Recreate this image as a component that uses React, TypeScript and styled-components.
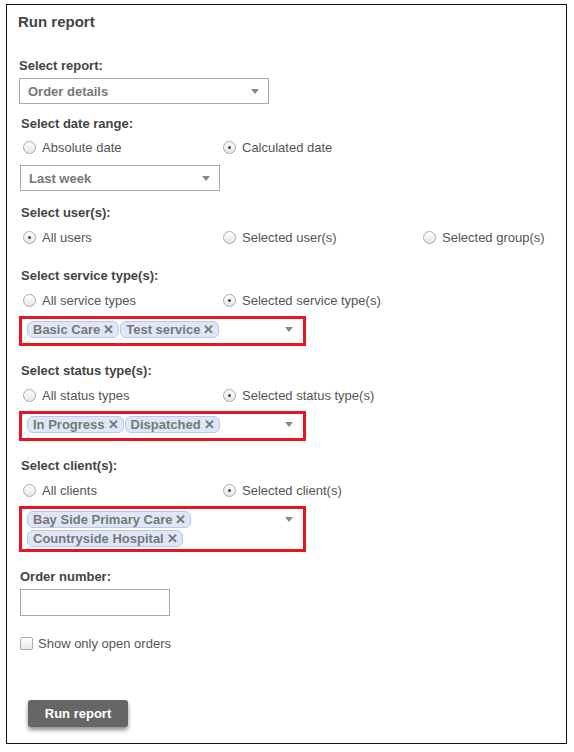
import styled, { createGlobalStyle } from 'styled-components';

const GlobalStyle = createGlobalStyle`
  body {
    margin: 0;
    background: #fff;
    font-family: 'Liberation Sans', Arial, sans-serif;
  }
`;

const Panel = styled.div`
  box-sizing: border-box;
  width: 561px;
  height: 740px;
  margin: 4px 0 0 6px;
  padding: 9px 12px 0 11px;
  border: 1px solid #111;
  display: flex;
  flex-direction: column;
  align-items: flex-start;
`;

const Title = styled.h1`
  margin: 0;
  font-size: 15px;
  line-height: 16px;
  font-weight: bold;
  color: #444;
`;

const Label = styled.div<{ $mt: number; $indent?: number }>`
  margin-top: ${({ $mt }) => $mt}px;
  margin-left: ${({ $indent = 1 }) => $indent}px;
  font-size: 13px;
  line-height: 16px;
  font-weight: bold;
  color: #444;
`;

const Caret = styled.span`
  width: 0;
  height: 0;
  border-left: 4px solid transparent;
  border-right: 4px solid transparent;
  border-top: 5px solid #888;
`;

const Select = styled.div<{ $mt: number; $width: number; $indent?: number }>`
  box-sizing: border-box;
  margin-top: ${({ $mt }) => $mt}px;
  margin-left: ${({ $indent = 1 }) => $indent}px;
  width: ${({ $width }) => $width}px;
  height: 26px;
  padding: 0 9px 0 8px;
  border: 1px solid #aaa;
  display: flex;
  align-items: center;
  justify-content: space-between;
  font-size: 13px;
  font-weight: bold;
  color: #777;
`;

const RadioRow = styled.div<{ $mt: number }>`
  margin-top: ${({ $mt }) => $mt}px;
  margin-left: 5px;
  height: 18px;
  display: grid;
  grid-template-columns: 200px 200px 140px;
`;

const Option = styled.label`
  display: flex;
  align-items: center;
  gap: 6px;
  font-size: 13px;
  color: #555;
  white-space: nowrap;
`;

const RadioDot = styled.span<{ $checked?: boolean }>`
  box-sizing: border-box;
  width: 13px;
  height: 13px;
  border-radius: 50%;
  border: 1px solid #a9a9a9;
  background: linear-gradient(#fff, #e6e6e6);
  display: flex;
  align-items: center;
  justify-content: center;

  &::after {
    content: '';
    display: ${({ $checked }) => ($checked ? 'block' : 'none')};
    width: 3px;
    height: 3px;
    border-radius: 50%;
    background: #444;
  }
`;

const TagBox = styled.div<{ $mt: number; $height: number }>`
  box-sizing: border-box;
  position: relative;
  margin: ${({ $mt }) => $mt}px 0 0 1px;
  width: 287px;
  height: ${({ $height }) => $height}px;
  padding: 2px 24px 0 5px;
  border: 3px solid #e8141e;
  display: flex;
  flex-wrap: wrap;
  align-content: flex-start;
  gap: 2px 1px;

  ${Caret} {
    position: absolute;
    right: 10px;
    top: 8px;
  }
`;

const Tag = styled.span`
  box-sizing: border-box;
  height: 17px;
  padding: 0 4px 0 5px;
  display: inline-flex;
  align-items: center;
  gap: 3px;
  background: #dfe7f7;
  border: 1px solid #b9c8e8;
  border-radius: 6px;
  font-size: 13px;
  font-weight: bold;
  color: #777;
  white-space: nowrap;

  b {
    font-size: 13px;
    color: #777;
  }
`;

const TextInput = styled.input<{ $mt: number }>`
  box-sizing: border-box;
  margin: ${({ $mt }) => $mt}px 0 0 2px;
  width: 150px;
  height: 27px;
  border: 1px solid #aaa;
  font: 13px 'Liberation Sans', Arial, sans-serif;
`;

const CheckRow = styled.label<{ $mt: number }>`
  margin-top: ${({ $mt }) => $mt}px;
  margin-left: 2px;
  height: 18px;
  display: flex;
  align-items: center;
  gap: 5px;
  font-size: 13px;
  color: #555;
`;

const CheckBox = styled.span`
  box-sizing: border-box;
  width: 13px;
  height: 13px;
  border: 1px solid #aaa;
  border-radius: 2px;
  background: linear-gradient(#fff, #e8e8e8);
`;

const RunButton = styled.button`
  margin: 48px 0 0 10px;
  width: 100px;
  height: 27px;
  border: none;
  border-radius: 3px;
  background: #666;
  color: #fff;
  font: bold 13px 'Liberation Sans', Arial, sans-serif;
  box-shadow: 0 3px 4px rgba(0, 0, 0, 0.45);
`;

type RadioOpt = { label: string; checked?: boolean };

function Radios({ mt, options }: { mt: number; options: RadioOpt[] }) {
  return (
    <RadioRow $mt={mt}>
      {options.map((o) => (
        <Option key={o.label}>
          <RadioDot $checked={o.checked} />
          {o.label}
        </Option>
      ))}
    </RadioRow>
  );
}

function Tags({ mt, height, items }: { mt: number; height: number; items: string[] }) {
  return (
    <TagBox $mt={mt} $height={height}>
      {items.map((t) => (
        <Tag key={t}>
          {t}
          <b>✕</b>
        </Tag>
      ))}
      <Caret />
    </TagBox>
  );
}

export default function App() {
  return (
    <>
      <GlobalStyle />
      <Panel>
        <Title>Run report</Title>

        <Label $mt={28}>Select report:</Label>
        <Select $mt={4} $width={250}>
          Order details
          <Caret />
        </Select>

        <Label $mt={12} $indent={3}>Select date range:</Label>
        <Radios mt={6} options={[{ label: 'Absolute date' }, { label: 'Calculated date', checked: true }]} />
        <Select $mt={9} $width={200} $indent={2}>
          Last week
          <Caret />
        </Select>

        <Label $mt={14} $indent={3}>Select user(s):</Label>
        <Radios
          mt={7}
          options={[
            { label: 'All users', checked: true },
            { label: 'Selected user(s)' },
            { label: 'Selected group(s)' },
          ]}
        />

        <Label $mt={22} $indent={3}>Select service type(s):</Label>
        <Radios
          mt={7}
          options={[{ label: 'All service types' }, { label: 'Selected service type(s)', checked: true }]}
        />
        <Tags mt={7} height={30} items={['Basic Care', 'Test service']} />

        <Label $mt={17} $indent={3}>Select status type(s):</Label>
        <Radios
          mt={7}
          options={[{ label: 'All status types' }, { label: 'Selected status type(s)', checked: true }]}
        />
        <Tags mt={7} height={30} items={['In Progress', 'Dispatched']} />

        <Label $mt={17} $indent={3}>Select client(s):</Label>
        <Radios mt={7} options={[{ label: 'All clients' }, { label: 'Selected client(s)', checked: true }]} />
        <Tags mt={7} height={46} items={['Bay Side Primary Care', 'Countryside Hospital']} />

        <Label $mt={17} $indent={2}>Order number:</Label>
        <TextInput $mt={4} />

        <CheckRow $mt={18}>
          <CheckBox />
          Show only open orders
        </CheckRow>

        <RunButton>Run report</RunButton>
      </Panel>
    </>
  );
}
